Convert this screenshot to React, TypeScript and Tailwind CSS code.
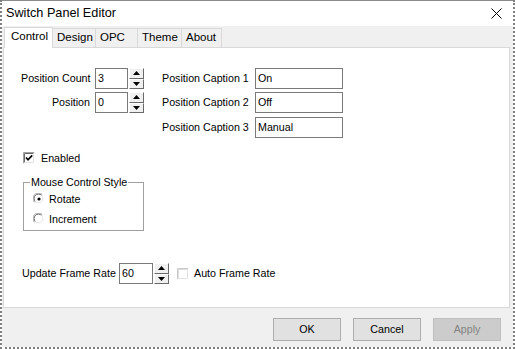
import React from 'react';

function SpinButtons() {
  return (
    <div className="flex flex-col w-[15px] h-[21px] ml-[1px]">
      {[0, 1].map((i) => (
        <div
          key={i}
          className="flex-1 flex items-center justify-center bg-[#f0f0f0] border border-t-white border-l-white border-r-[#696969] border-b-[#696969]"
        >
          <svg width="7" height="4" viewBox="0 0 7 4">
            {i === 0 ? <polygon points="3.5,0 7,4 0,4" fill="#000" /> : <polygon points="0,0 7,0 3.5,4" fill="#000" />}
          </svg>
        </div>
      ))}
    </div>
  );
}

function Spinner({ value, inputWidth = 'w-[33px]' }: { value: string; inputWidth?: string }) {
  return (
    <div className="flex items-center">
      <div className={`${inputWidth} h-[21px] border border-[#7a7a7a] bg-white flex items-center pl-[2px]`}>{value}</div>
      <SpinButtons />
    </div>
  );
}

function TextBox({ value }: { value: string }) {
  return <div className="w-[88px] h-[21px] border border-[#7a7a7a] bg-white flex items-center pl-[2px]">{value}</div>;
}

function CheckBox({ checked }: { checked?: boolean }) {
  return (
    <svg width="12" height="12" viewBox="0 0 12 12" className="shrink-0">
      <rect x="0" y="0" width="12" height="12" fill="#ffffff" />
      <path d="M0.5 11.5 V0.5 H11.5" stroke={checked ? '#a0a0a0' : '#c8c8c8'} fill="none" />
      <path d="M1.5 10.5 V1.5 H10.5" stroke={checked ? '#696969' : '#dcdcdc'} fill="none" />
      <path d="M11.5 0.5 V11.5 H0.5" stroke="#ffffff" fill="none" />
      <path d="M10.5 1.5 V10.5 H1.5" stroke="#e3e3e3" fill="none" />
      {checked && <path d="M3 5.5 L5 7.8 L9.2 3.4" stroke="#000" strokeWidth="1.7" fill="none" />}
    </svg>
  );
}

function Radio({ checked }: { checked?: boolean }) {
  return (
    <svg width="12" height="12" viewBox="0 0 12 12" className="shrink-0">
      <circle cx="6" cy="6" r="5" fill="#ffffff" />
      <path d="M1.6 9.4 A5 5 0 0 1 9.4 1.6" stroke="#a0a0a0" strokeWidth="1" fill="none" />
      <path d="M2.4 8.6 A3.9 3.9 0 0 1 8.6 2.4" stroke="#696969" strokeWidth="1" fill="none" />
      <path d="M9.4 1.6 A5 5 0 0 1 1.6 9.4" stroke="#ffffff" strokeWidth="1" fill="none" />
      <path d="M8.6 2.4 A3.9 3.9 0 0 1 2.4 8.6" stroke="#e3e3e3" strokeWidth="1" fill="none" />
      {checked && <circle cx="6" cy="6" r="1.6" fill="#000" />}
    </svg>
  );
}

const tabs = ['Control', 'Design', 'OPC', 'Theme', 'About'];
const tabWidths = ['w-[49px]', 'w-[43px]', 'w-[42px]', 'w-[44px]', 'w-[40px]'];

export default function App() {
  return (
    <div className="w-[515px] h-[349px] bg-white text-[10.7px] text-black whitespace-nowrap" style={{ fontFamily: '"Liberation Sans", Arial, sans-serif' }}>
      <div className="w-full h-full flex flex-col border-x-2 border-b-2 border-dotted border-[#7f7f7f]">
        <div className="h-px bg-[#8a8a8a]" />
        {/* title bar */}
        <div className="h-[25px] flex items-center justify-between pl-[4px] pr-[11px] bg-white">
          <span className="text-[12.7px]">Switch Panel Editor</span>
          <svg width="11" height="11" viewBox="0 0 11 11">
            <path d="M0.5 0.5 L10.5 10.5 M10.5 0.5 L0.5 10.5" stroke="#000" strokeWidth="1" />
          </svg>
        </div>

        <div className="flex-1 flex flex-col bg-[#f0f0f0]">
          {/* tabs */}
          <div className="h-[21px] flex items-end pl-[2px]">
            {tabs.map((t, i) =>
              i === 0 ? (
                <div
                  key={t}
                  className={`${tabWidths[i]} h-[21px] -mb-px relative z-10 bg-white border border-b-0 border-[#d9d9d9] flex items-center pl-[6px] pb-[2px] text-[11.5px]`}
                >
                  {t}
                </div>
              ) : (
                <div
                  key={t}
                  className={`${tabWidths[i]} h-[19px] bg-[#f0f0f0] border border-l-0 border-b-0 border-[#d9d9d9] flex items-center pl-[4px] text-[11.5px]`}
                >
                  {t}
                </div>
              )
            )}
          </div>

          {/* panel */}
          <div className="flex-1 ml-[1px] mr-[3px] bg-white border border-[#d9d9d9] pt-[20px] pl-[17px]">
            <div className="flex">
              <div className="flex flex-col gap-[3px]">
                <div className="flex items-center gap-[5px]">
                  <div className="w-[69px] text-right">Position Count</div>
                  <Spinner value="3" />
                </div>
                <div className="flex items-center gap-[5px]">
                  <div className="w-[69px] text-right">Position</div>
                  <Spinner value="0" />
                </div>
              </div>
              <div className="flex flex-col gap-[3px] ml-[18px]">
                {['On', 'Off', 'Manual'].map((v, i) => (
                  <div key={v} className={`flex items-center gap-[5px] ${i === 2 ? 'mt-[1px]' : ''}`}>
                    <div className="w-[88px]">Position Caption {i + 1}</div>
                    <TextBox value={v} />
                  </div>
                ))}
              </div>
            </div>

            <div className="h-[16px] mt-[12px] ml-[2px] flex items-center gap-[6px]">
              <CheckBox checked />
              <span>Enabled</span>
            </div>

            <fieldset className="w-[121px] ml-[2px] mt-[10px] border border-[#a0a0a0] pl-[9px] pb-[1px]">
              <legend className="ml-[-3px] px-[1px] leading-[13px]">Mouse Control Style</legend>
              <div className="h-[20px] flex items-center gap-[4px]">
                <Radio checked />
                <span>Rotate</span>
              </div>
              <div className="h-[20px] flex items-center gap-[4px]">
                <Radio />
                <span>Increment</span>
              </div>
            </fieldset>

            <div className="flex items-center mt-[32px] ml-[1px]">
              <span className="w-[97px]">Update Frame Rate</span>
              <Spinner value="60" inputWidth="w-[34px]" />
              <div className="ml-[8px] mr-[5px]">
                <CheckBox />
              </div>
              <span>Auto Frame Rate</span>
            </div>
          </div>

          {/* footer */}
          <div className="h-[39px] flex items-start justify-end gap-[12px] pt-[10px] pr-[12px]">
            <button className="w-[68px] h-[23px] bg-[#e1e1e1] border border-[#adadad]">OK</button>
            <button className="w-[68px] h-[23px] bg-[#e1e1e1] border border-[#adadad]">Cancel</button>
            <button className="w-[68px] h-[23px] bg-[#cccccc] border border-[#bfbfbf] text-[#838383]">Apply</button>
          </div>
        </div>
      </div>
    </div>
  );
}
